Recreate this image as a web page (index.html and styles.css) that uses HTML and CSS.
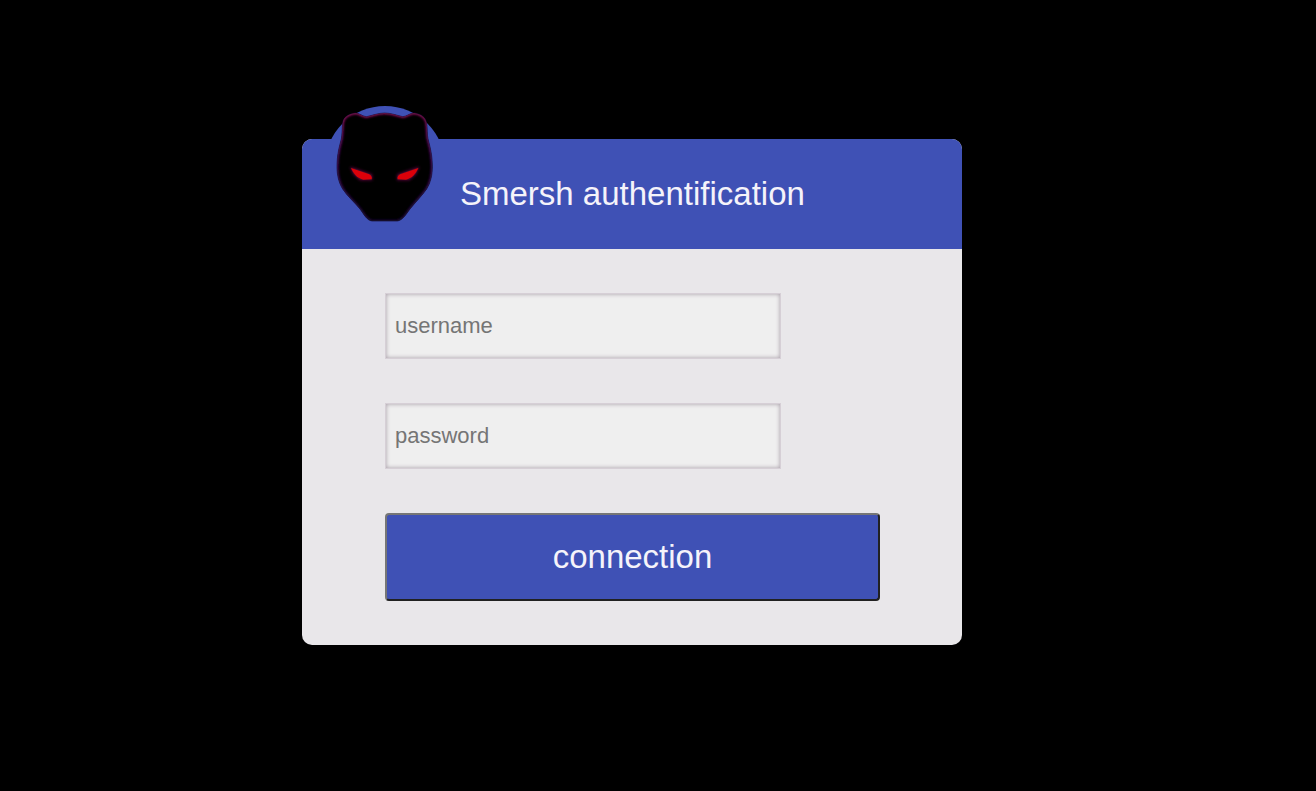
FILE: index.html
```html
<!DOCTYPE html>
<html lang="en">
<head>
    <meta charset="UTF-8">
    <title>Smersh authentification</title>
    <link rel="stylesheet" href="styles.css">
</head>
<body>
    <div class="login-card">
        <div class="logo-disc"></div>
        <div class="login-header">
            <h1 class="login-title">Smersh authentification</h1>
        </div>

        <!-- panther mask, drawn over the disc and the header -->
        <svg class="logo" viewBox="0 0 510 480" width="170" height="160" aria-hidden="true">
            <defs>
                <path id="mask-shape" d="M128 84C130 68 142 58 166 54C178 54 188 65 200 65C218 61 236 54 254 54C272 54 290 61 308 65C320 65 330 54 342 54C364 57 376 66 380 84C382 100 381 118 384 132C390 155 397 180 397 215C397 240 392 262 380 282C366 302 346 322 330 342C318 358 308 376 292 378L216 378C200 376 192 358 180 342C164 322 142 304 128 282C116 262 111 240 111 215C111 180 118 155 124 132C127 118 126 100 128 84Z"/>
                <clipPath id="mask-clip">
                    <use href="#mask-shape"/>
                </clipPath>
                <linearGradient id="edge" x1="0" y1="0" x2="0" y2="1">
                    <stop offset="0" stop-color="#8c1058"/>
                    <stop offset="0.4" stop-color="#4a0e62"/>
                    <stop offset="1" stop-color="#1e0a36"/>
                </linearGradient>
                <filter id="soft" x="-10%" y="-10%" width="120%" height="120%">
                    <feGaussianBlur stdDeviation="3"/>
                </filter>
                <filter id="halo" x="-40%" y="-60%" width="180%" height="220%">
                    <feGaussianBlur stdDeviation="4"/>
                </filter>
            </defs>
            <use class="logo-mask" href="#mask-shape"/>
            <g clip-path="url(#mask-clip)">
                <use class="logo-edge" href="#mask-shape" filter="url(#soft)"/>
            </g>
            <path class="logo-halo" filter="url(#halo)" d="M150 215L216 238L217 256L180 256L160 238Z"/>
            <path class="logo-halo" filter="url(#halo)" d="M358 215L292 238L291 256L328 256L348 238Z"/>
            <path class="logo-eye" d="M153 219L208 238C214 241 217 247 215 253L190 254C172 250 160 236 153 219Z"/>
            <path class="logo-eye" d="M355 219L300 238C294 241 291 247 293 253L318 254C336 250 348 236 355 219Z"/>
        </svg>

        <form class="login-form">
            <input class="login-input" type="text" placeholder="username">
            <input class="login-input" type="password" placeholder="password">
            <button class="login-button" type="button">connection</button>
        </form>
    </div>
</body>
</html>
```

FILE: styles.css
```css
* {
    margin: 0;
    padding: 0;
    box-sizing: border-box;
}

body {
    background: #000;
    font-family: "Liberation Sans", Arial, sans-serif;
    padding: 139px 0 0 302px;
}

.login-card {
    position: relative;
    width: 660px;
    height: 506px;
    background: #e9e7ea;
    border-radius: 10px;
}

.logo-disc {
    position: absolute;
    left: 23px;
    top: -33px;
    width: 120px;
    height: 120px;
    border-radius: 50%;
    background: #3f51b5;
}

.login-header {
    position: relative;
    height: 110px;
    background: #3f51b5;
    border-radius: 10px 10px 0 0;
    padding-left: 158px;
    display: flex;
    align-items: center;
}

.login-title {
    font-size: 33px;
    font-weight: 400;
    color: #f5f3fa;
}

.logo {
    position: absolute;
    left: -2px;
    top: -44px;
}

.logo-mask {
    fill: #000;
    stroke: #120e30;
    stroke-width: 2;
}

.logo-edge {
    fill: none;
    stroke: url(#edge);
    stroke-width: 8;
}

.logo-halo {
    fill: #5c0a3c;
}

.logo-eye {
    fill: #dc000a;
    stroke: #3c0a28;
    stroke-width: 2;
    paint-order: stroke;
}

.login-form {
    display: flex;
    flex-direction: column;
    align-items: flex-start;
    gap: 44px;
    padding: 44px 0 0 83px;
}

.login-input {
    width: 396px;
    height: 66px;
    padding: 0 9px;
    background: #efefef;
    border: 1px solid #d6cfd6;
    box-shadow: inset 0 0 4px #a59ba5;
    font-family: inherit;
    font-size: 22px;
    color: #333;
}

.login-input::placeholder {
    color: #757575;
}

.login-button {
    width: 495px;
    height: 88px;
    background: #3f51b5;
    border: 2px solid;
    border-color: #767676 #212121 #212121 #767676;
    border-radius: 4px;
    font-family: inherit;
    font-size: 33px;
    color: #f5f3fa;
}
```
